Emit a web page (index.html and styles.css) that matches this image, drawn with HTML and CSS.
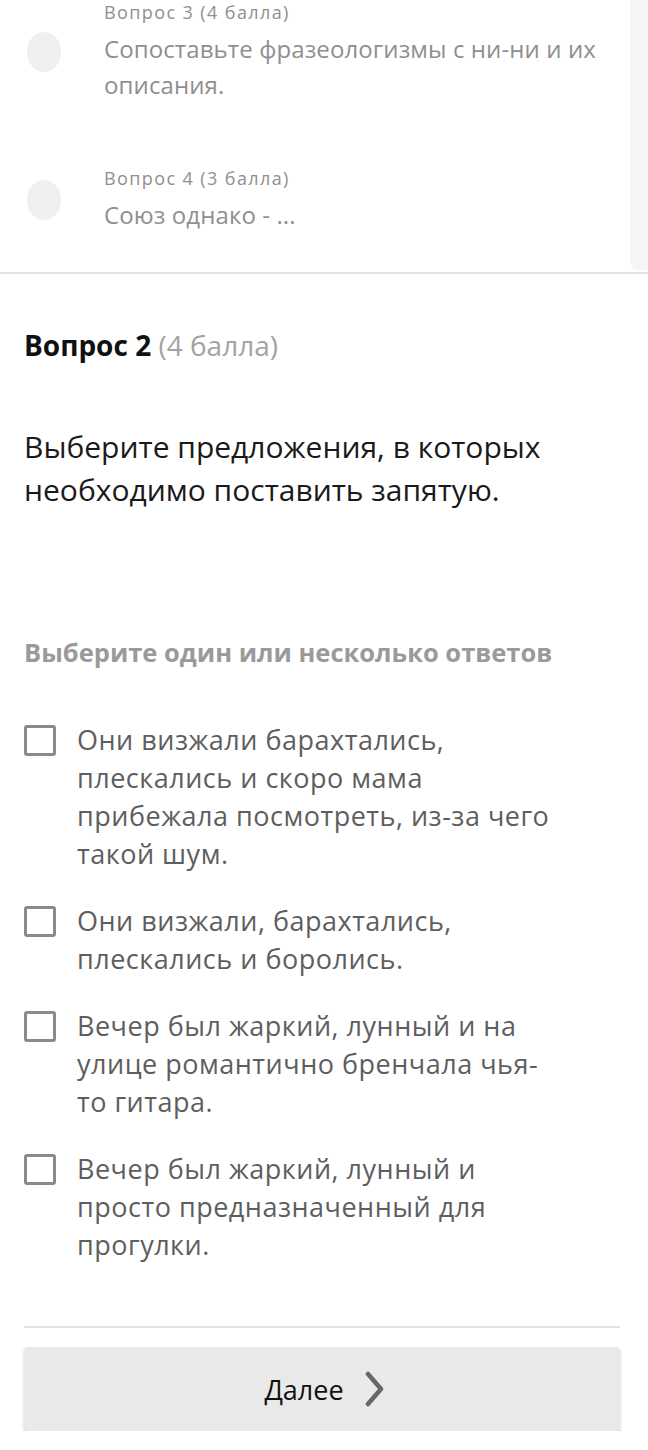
FILE: index.html
```html
<!DOCTYPE html>
<html lang="ru">
<head>
<meta charset="utf-8">
<link rel="stylesheet" href="styles.css">
</head>
<body>
<div class="nav-panel">
  <div class="nav-list">
    <div class="nav-item">
      <div class="dot"></div>
      <div class="nav-text">
        <div class="nav-label">Вопрос 3 (4 балла)</div>
        <div class="nav-title">Сопоставьте фразеологизмы с ни-ни и их описания.</div>
      </div>
    </div>
    <div class="nav-item">
      <div class="dot"></div>
      <div class="nav-text">
        <div class="nav-label">Вопрос 4 (3 балла)</div>
        <div class="nav-title">Союз однако - ...</div>
      </div>
    </div>
  </div>
  <div class="scroll-strip"></div>
</div>

<main class="question">
  <h2 class="q-head"><span class="q-num">Вопрос 2</span> <span class="q-points">(4 балла)</span></h2>
  <p class="q-text">Выберите предложения, в которых необходимо поставить запятую.</p>
  <p class="q-hint">Выберите один или несколько ответов</p>
  <ul class="options">
    <li class="option"><span class="box"></span><span class="opt-text">Они визжали барахтались, плескались и скоро мама прибежала посмотреть, из-за чего такой шум.</span></li>
    <li class="option"><span class="box"></span><span class="opt-text">Они визжали, барахтались, плескались и боролись.</span></li>
    <li class="option"><span class="box"></span><span class="opt-text">Вечер был жаркий, лунный и на улице романтично бренчала чья-то гитара.</span></li>
    <li class="option"><span class="box"></span><span class="opt-text">Вечер был жаркий, лунный и просто предназначенный для прогулки.</span></li>
  </ul>
  <div class="footer">
    <button class="next-btn">Далее <svg class="chev" width="22" height="36" viewBox="0 0 22 36"><path d="M4 3 L17 18 L4 33" fill="none" stroke="#676767" stroke-width="4.5" stroke-linecap="round" stroke-linejoin="round"/></svg></button>
  </div>
</main>
</body>
</html>
```
FILE: styles.css
```css
* { box-sizing: border-box; }
html, body { margin: 0; padding: 0; background: #fff; }
body {
  font-family: "Open Sans", "Noto Sans", sans-serif;
  width: 648px;
  overflow: hidden;
}
.nav-panel {
  display: flex;
  height: 274px;
  border-bottom: 2px solid #e3e3e3;
}
.nav-list {
  flex: 1;
  display: flex;
  flex-direction: column;
}
.nav-item {
  display: flex;
  align-items: center;
  padding-left: 27px;
}
.nav-item + .nav-item { margin-top: 63px; }
.dot {
  width: 34px;
  height: 40px;
  border-radius: 50%;
  background: #f0f0f0;
  flex: none;
}
.nav-text { margin-left: 43px; }
.nav-label {
  font-size: 18px;
  line-height: 24px;
  letter-spacing: 1.4px;
  color: #8f8f8f;
}
.nav-title {
  font-size: 24px;
  line-height: 36px;
  letter-spacing: 0.1px;
  color: #8f8f8f;
  margin-top: 7px;
  padding-right: 10px;
}
.scroll-strip {
  width: 18px;
  background: #f6f6f6;
  border-bottom-left-radius: 8px;
  margin-bottom: 2px;
}
.question { padding: 0 28px 0 24px; }
.q-head {
  margin: 51px 0 0;
  font-size: 28px;
  line-height: 40px;
  font-weight: normal;
}
.q-num { font-weight: 700; color: #111; }
.q-points { color: #a3a3a3; font-weight: 400; }
.q-text {
  margin: 60px 0 0;
  font-size: 30px;
  line-height: 43px;
  color: #1a1a1a;
}
.q-hint {
  margin: 124px 0 0;
  font-size: 25.5px;
  line-height: 34px;
  font-weight: 700;
  color: #9a9a9a;
}
.options { list-style: none; margin: 52px 0 0; padding: 0; }
.option { display: flex; align-items: flex-start; }
.option + .option { margin-top: 29px; }
.box {
  flex: none;
  width: 32px;
  height: 31px;
  border: 3px solid #8a8a8a;
  border-radius: 3px;
  margin-top: 4px;
}
.opt-text {
  margin-left: 21px;
  width: 480px;
  font-size: 27px;
  line-height: 38px;
  letter-spacing: 0.5px;
  color: #5e5e5e;
}
.footer {
  margin-top: 62px;
  border-top: 2px solid #e3e3e3;
  padding-top: 19px;
}
.next-btn {
  width: 596px;
  height: 84px;
  border: none;
  border-radius: 4px;
  background: #e9e9e9;
  box-shadow: 0 2px 3px rgba(0,0,0,0.22);
  display: flex;
  align-items: center;
  justify-content: center;
  gap: 20px;
  font-family: "Open Sans", sans-serif;
  font-size: 27px;
  color: #111;
  padding: 0 0 0 6px;
}
.chev { display: block; }
```
